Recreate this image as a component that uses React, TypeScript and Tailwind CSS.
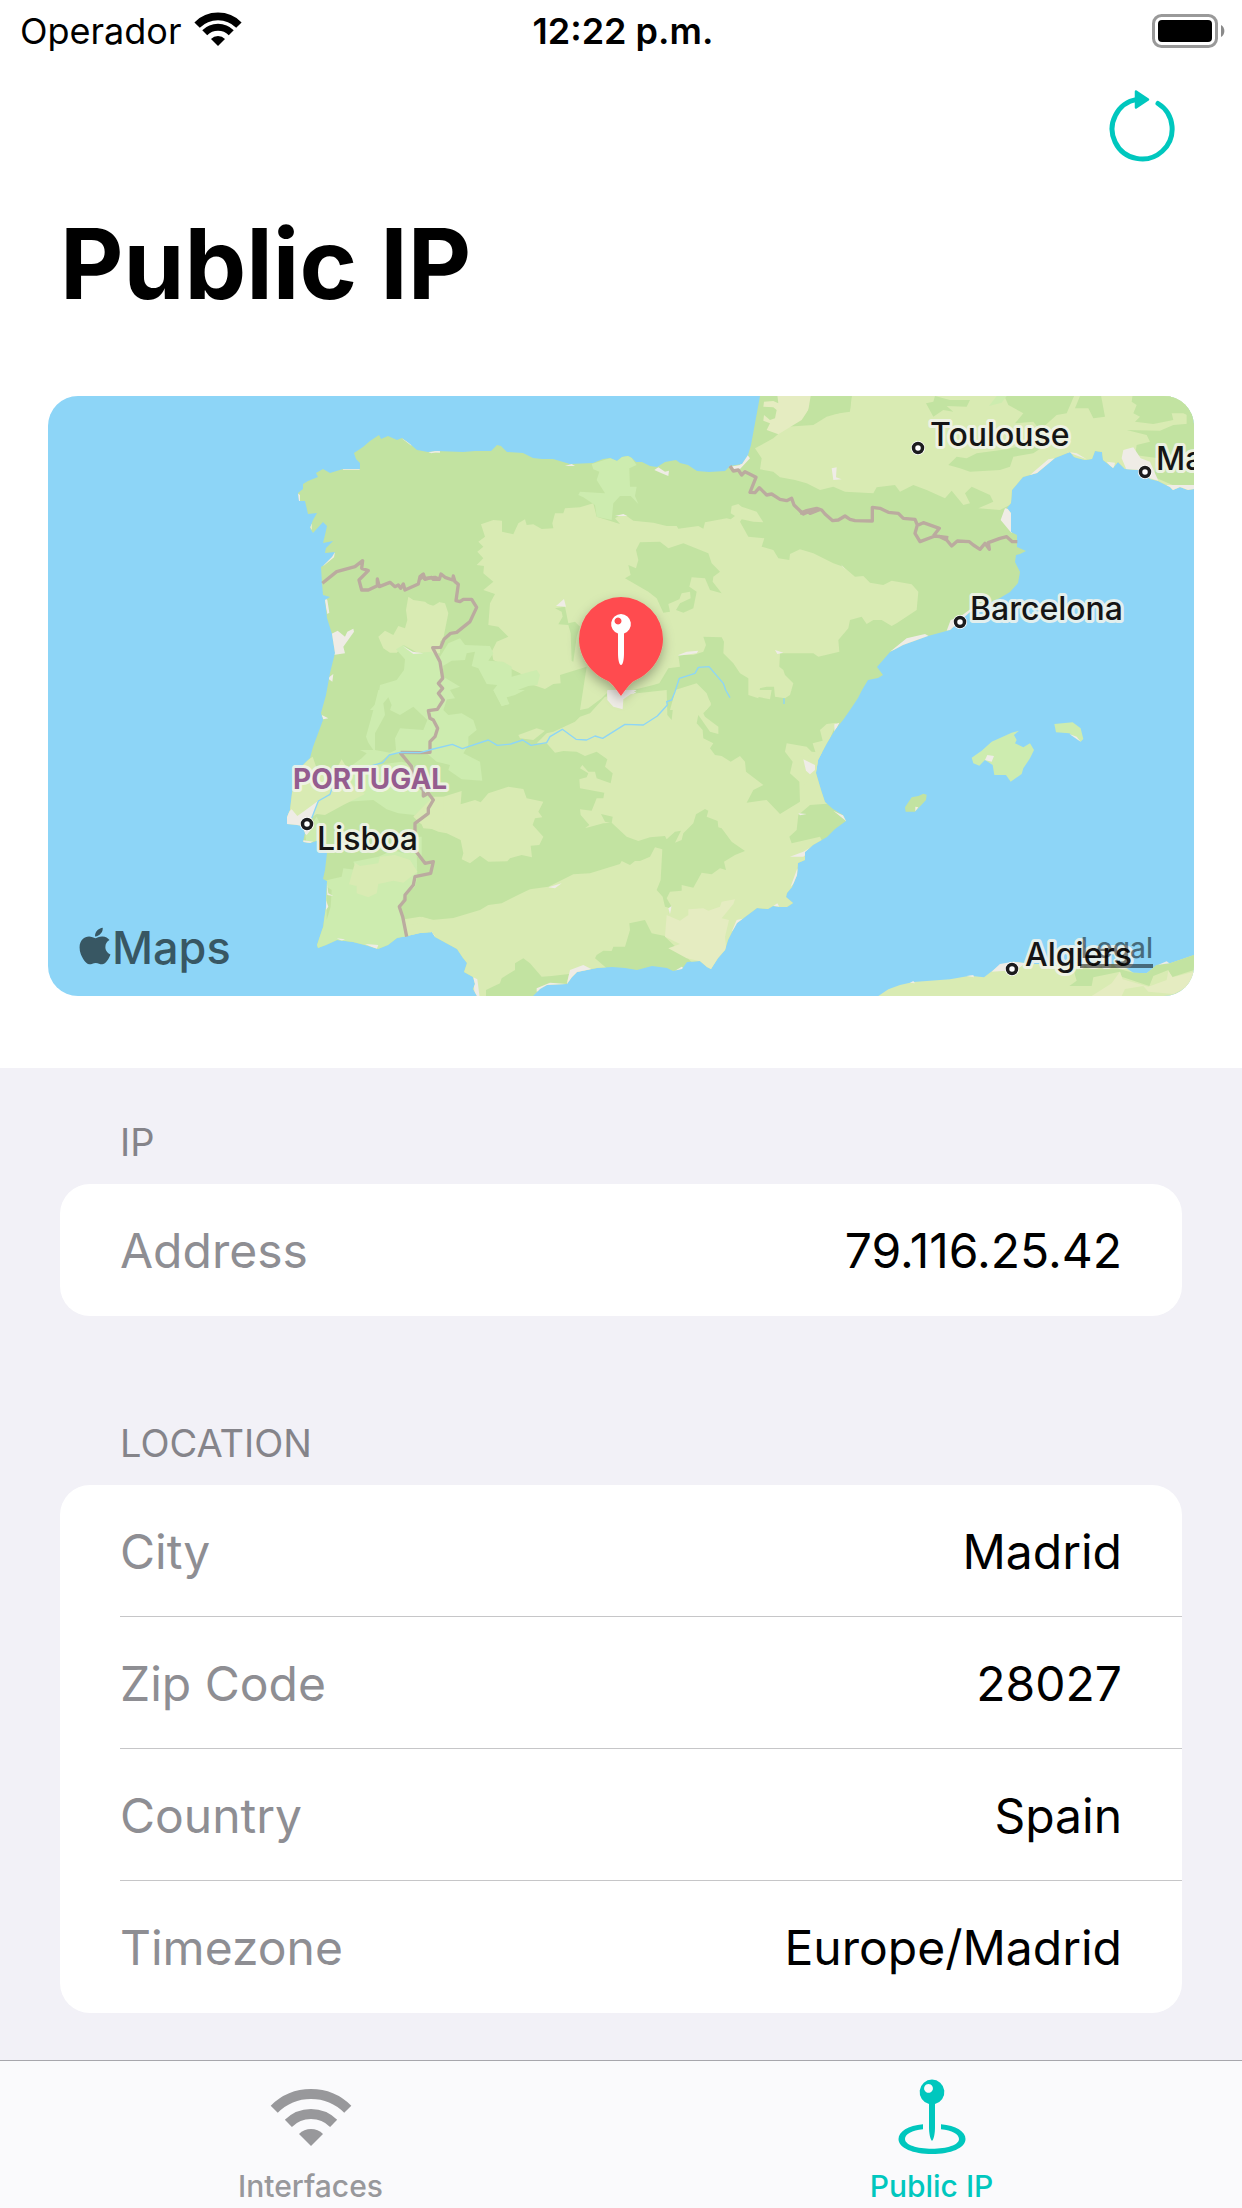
import React from "react";
import { FaApple } from "react-icons/fa";

const SOIL = "#c2e3a1";
const MEADOW = "#d9ebb3";
const LUSH = "#cdecaf";
const ARID = "#e5ecc1";
const URBAN = "#efece6";
const WATER = "#8dd5f7";
const BORDER = "#bbab9f";

const MAINLAND =
  "M760 396 751 445 748 455 742 464 730 466 725 471 709 472 697 471 688 465 680 463 676 460 665 462 657 467 650 466 642 462 636 462 632 458 628 456 622 457 617 461 610 458 603 459 593 463 570 464 553 459 542 459 533 458 523 453 507 452 501 446 497 445 491 451 475 451 463 452 437 451 428 452 417 450 410 444 402 438 397 440 388 436 381 439 379 435 370 441 363 447 354 453 356 459 360 463 360 469 343 469 330 473 323 469 316 473 318 477 308 481 303 484 303 489 298 493 299 501 305 501 308 514 317 513 313 520 310 528 313 533 323 522 327 526 325 535 323 543 333 541 326 548 325 553 335 552 332 557 324 565 321 567 322 583 323 595 330 597 325 600 327 618 332 634 335 653 330 673 326 695 321 713 323 720 313 747 310 758 303 765 295 778 292 793 290 810 287 817 287 824 297 825 302 826 305 833 303 842 310 843 320 840 327 853 325 870 323 879 327 881 326 907 323 927 317 945 318 948 326 945 337 940 353 942 365 945 378 949 388 945 397 938 407 936 420 933 432 932 435 937 457 949 463 958 467 963 464 972 473 977 475 984 473 989 477 996 533 996 540 989 547 985 567 984 572 977 577 972 597 968 612 967 625 968 637 970 652 966 667 968 673 971 682 969 687 962 700 961 707 967 711 969 718 958 725 950 728 940 732 932 737 923 757 908 768 909 773 906 780 907 787 907 793 903 786 897 787 893 792 887 797 875 798 863 805 860 805 852 813 845 827 837 835 829 846 821 843 815 833 809 825 802 821 790 816 773 818 760 827 743 835 730 843 720 850 710 858 698 862 690 868 680 878 678 883 675 877 667 890 652 903 645 928 636 950 630 970 612 1000 598 1010 592 1018 583 1020 572 1015 562 1016 555 1020 554 1026 551 1017 547 1017 535 1011 532 1011 513 1007 508 1011 503 1012 490 1023 477 1037 473 1055 458 1070 452 1074 457 1077 458 1085 460 1092 459 1095 451 1102 452 1103 460 1113 468 1118 462 1125 469 1140 470 1150 479 1158 481 1170 487 1173 490 1180 487 1188 490 1194 489V396Z";

type TileProps = { x: number; y: number; children: React.ReactNode };

/* Terrain is authored on tiles drawn at three times the map scale. */
function Tile({ x, y, children }: TileProps) {
  return <g transform={`translate(${x} ${y}) scale(0.33333)`}>{children}</g>;
}

function Terrain() {
  return (
    <g clipPath="url(#mainland)">
      <Tile x={420} y={390}>
        <path fill={MEADOW} d="M183 403 220 390 246 392 246 425 280 433 295 400 315 388 320 405 340 403 365 417 400 415 397 400 405 370 430 370 435 355 480 352 520 340 530 380 600 402 585 385 600 376 620 378 640 392 700 398 740 408 770 408 775 416 835 408 850 416 855 397 920 385 932 388 945 378 932 370 935 348 955 342 965 350 1010 365 1030 397 1000 395 965 388 960 395 985 440 1033 445 1025 470 1060 480 1075 505 1108 510 1110 492 1140 478 1180 490 1240 520 1270 530 1305 560 1330 558 1350 578 1390 585 1415 572 1475 583 1495 605 1490 660 1430 700 1415 708 1385 690 1360 690 1340 702 1325 680 1290 690 1285 715 1255 750 1258 785 1195 800 1180 790 1080 790 1078 830 1090 840 1095 855 1120 880 1110 915 1095 925 1065 920 1062 890 1040 890 1020 895 1015 925 985 915 985 865 960 850 940 820 910 790 912 755 905 742 850 740 858 765 850 785 820 795 775 795 780 830 745 835 718 880 700 885 640 900 560 910 545 925 505 955 480 960 500 830 420 855 422 880 400 882 375 897 340 885 300 850 220 810 215 785 230 755 265 740 235 710 205 705 210 640 225 612 190 600 220 575 190 550 192 528 170 525 190 505 172 485 190 470 175 455 195 440Z" />
        <path fill={SOIL} d="M660 457 720 455 745 475 790 460 865 490 875 520 900 545 880 560 878 575 905 610 870 600 855 565 815 562 808 590 830 605 820 655 790 668 768 660 780 640 812 625 810 605 785 610 778 628 745 642 750 665 730 668 710 625 685 605 615 565 632 555 625 525 648 535 655 510 648 480ZM405 655 435 650 445 700 465 695 480 710 470 740 460 815 455 813 452 730 445 705 415 703 428 680 425 665Z" />
        <path fill={LUSH} d="M515 222 560 208 625 190 650 225 628 235 630 290 650 290 645 318 655 342 632 318 600 318 580 340 575 390 530 380 525 345 490 322 475 315 480 305 555 310 530 270 538 245 520 238Z" />
        <path fill={MEADOW} d="M0 635 50 650 60 637 75 640 85 670 70 745 40 775 0 790Z" />
        <path fill={LUSH} d="M0 790 50 780 70 830 65 870 70 930 0 960ZM85 760 120 745 135 765 210 768 220 790 205 812 250 815 275 830 275 860 350 840 360 855 352 885 325 888 280 905 255 920 268 942 245 948 220 900 232 885 200 882 175 835 155 828 165 785 140 790 135 810 95 812 65 830 70 860 120 890 90 900 105 925 70 930 60 800Z" />
        <path fill={MEADOW} d="M765 905 815 890 860 918 873 940 860 960 750 960ZM1005 175 1060 145 1100 110 1180 105 1220 80 1290 60 1298 0 2300 0V310H1800L1780 340 1740 360 1675 355 1720 335 1710 315 1655 290 1635 310 1650 340 1630 345 1595 302 1575 325 1520 300 1480 285 1440 305 1425 285 1370 292 1360 310 1275 305 1240 290 1200 300 1160 280 1125 270 1080 262 1060 245 1020 238 1025 205Z" />
        <path fill={ARID} d="M1070 0H1173V40L1165 60 1145 90 1075 133 1040 120 1050 100 1030 92 1032 75 1050 90 1065 85 1070 60 1060 52 1030 50 1032 35 1060 33 1075 40Z" />
        <path fill={URBAN} d="M408 648 432 627 438 650ZM562 903 600 912 650 905 610 935 608 960 580 955 562 935ZM703 240 715 232 735 245 747 242 745 258 725 250ZM930 230 960 225 980 192 990 205 960 237 940 237ZM1065 780 1090 788 1072 792ZM775 795 800 785 835 782 830 790 775 797ZM435 228 455 222 465 228ZM25 186 50 182 55 184 35 190ZM585 378 610 372 622 378Z" />
      </Tile>

      <Tile x={800} y={390}>
        <path fill={SOIL} d="M35 0H155L150 65 80 75 45 100 0 105 25 60ZM445 225 470 200 500 205 530 190 620 178 670 165 740 140 745 160 700 190 640 200 630 230 600 240 510 245 480 235ZM605 0H830L800 70 770 75 720 120 700 95 645 100 670 70 625 45ZM378 40 400 35 405 18 450 30 510 30 500 50 440 48 460 65 430 60 400 80ZM840 18 855 0H900L915 80 880 85 865 55 825 55ZM1000 0H1182V85L1150 70 1115 70 1120 90 1060 102 1005 95 1020 80 1000 70 1010 45 995 35ZM980 120 1080 122 1120 105 1182 100V310L1130 290 1060 260 1075 205 1005 195 1010 165 1050 155 1040 135Z" />
        <path fill={LUSH} d="M567 48 590 18H620L605 38Z" />
        <path fill={URBAN} d="M970 180 1000 172 1022 205 1050 215 1075 272 1040 262 980 240 965 205ZM920 215 945 218 940 240ZM690 255 745 208 765 205 710 260ZM602 390 615 355 640 360 635 430ZM452 690 480 680 515 655 520 675 455 720 440 722ZM270 785 320 745 375 732 390 740 310 770ZM1100 285 1182 285V310H1100ZM100 270 95 235 110 232 108 262 125 268ZM122 522 138 540 128 530ZM800 185 860 208 830 190Z" />
      </Tile>

      <Tile x={420} y={690}>
        <path fill={MEADOW} d="M555 20 510 70 480 80 465 95 400 125 380 130 350 160 380 160 405 188 430 183 470 185 495 198 530 185 562 208 555 230 578 250 572 280 530 265 525 245 505 245 487 225 480 235 505 250 500 262 478 268 480 295 553 308 550 325 530 325 515 362 480 358 482 375 508 405 495 415 550 400 575 398 620 440 655 453 690 442 735 438 740 448 765 425 783 422 765 458 785 450 790 430 820 400 828 373 855 357 865 362 860 380 893 393 895 412 905 415 935 455 975 483 945 495 912 515 918 540 900 535 875 553 845 548 820 593 785 585 785 602 750 605 740 625 755 650 735 690 735 740 850 850 1200 700 1220 480 1200 440 1115 460 1108 440 1130 420 1135 375 1170 345 1240 340 1240 190 1175 185 1160 170 1100 160 1095 185 1118 215 1110 250 1138 275 1140 335 1080 372 1040 330 980 338 1000 300 1030 285 978 245 975 215 960 198 932 215 905 198 885 195 870 175 880 160 850 145 848 120 830 100 835 75 870 125 895 132 895 110 855 80 850 70 873 45 860 10 830 -20 765 0 755 90 742 75 740 0Z" />
        <path fill={SOIL} d="M543 372 578 380 575 400 555 395Z" />
        <path fill={MEADOW} d="M30 320 70 320 125 303 122 343 165 330 182 337 205 310 265 290 310 297 320 325 370 335 355 365 367 382 345 385 338 405 370 440 358 465 332 467 336 502 305 495 270 505 262 514 205 515 180 497 150 520 125 508 130 490 122 450 80 430 55 425 20 410 0 400-20 380ZM1010 0H1055L1050 28 1012 20ZM1075 0H1115L1095 18ZM295 135 350 115 375 122 340 150 300 145Z" />
        <path fill={MEADOW} d="M-60 690 0 680 35 690 100 684 180 660 205 645 245 640 300 612 330 598 385 590 460 553 510 550 600 522 605 513 630 525 645 513 660 513 690 500 705 472 727 478 722 570 710 600 728 620 735 650 750 655 740 690 780 760 735 738 695 730 675 690 628 700 630 720 615 770 580 770 575 783 550 782 530 795 525 805 560 835 520 850 470 850 440 880 447 852 395 858 365 860 330 820 310 805 285 820 285 840 245 865 240 880 198 900 198 930 120 930 120 800 0 740-60 740Z" />
        <path fill={ARID} d="M740 675 780 692 805 675 805 658 850 655 865 662 900 650 905 635 945 628 940 642 905 685 927 690 915 740 920 790 873 850 835 812 800 805 745 775 780 762 735 740Z" />
        <path fill={LUSH} d="M-20 0H90L70 60 85 75 125 70 160 90 170 120 145 140 145 165 130 190 180 215 187 272 125 268 85 240 90 225 50 215 20 190-20 190ZM220 0H315L285 15 260 22 268 42 245 48ZM-10 440H5V500H-10Z" />
        <path fill={URBAN} d="M450 840 490 825 515 838 475 848 455 870 440 885ZM562 0H650L610 28 608 58 580 50 562 30ZM350 895 390 878 440 882 350 905ZM1152 208 1187 225 1185 240 1172 253 1157 242ZM1110 500 1150 485 1200 455 1150 500ZM1112 590 1132 535 1140 560ZM935 725 950 690 975 685 940 720ZM160 862 172 868 180 930H165ZM385 592 425 580 405 595ZM745 655 755 648 750 672ZM765 842 785 830 795 838ZM1135 370 1160 372 1140 376ZM20 732 40 722V740ZM1060 648 1072 640 1078 650Z" />
      </Tile>

      <Tile x={800} y={690}>
        <path fill={MEADOW} d="M60 120 80 102 110 98 50 240 0 300V200L48 192 38 160 68 152Z" />
        <path fill={URBAN} d="M10 208 45 225 45 240 30 253 18 242ZM103 103 118 98 103 128ZM115 370 140 380 138 393 100 362Z" />
      </Tile>

      <Tile x={40} y={390}>
        <path fill={MEADOW} d="M1105 620 1120 630 1155 635 1175 650 1200 635V790H1135L1090 765 1070 788 1050 788 1030 775 1015 740 1035 722 1060 735 1075 708 1095 715 1102 690 1098 660Z" />
        <path fill={LUSH} d="M1068 778 1090 765 1120 790 1175 785 1205 830V960H990L1013 935 1020 885 1070 870 1092 840 1095 808Z" />
        <path fill={SOIL} d="M1030 930 1045 922 1055 945 1025 965ZM1110 955 1155 920 1200 925V965H1110Z" />
        <path fill={URBAN} d="M872 733 893 722 915 740 922 725 940 716 942 725 910 770 915 790 880 795ZM850 528 855 508 885 487 882 502ZM908 239 920 225 930 233 942 220 960 239ZM852 622 862 630 868 668 862 672ZM863 865 880 852 877 875ZM773 310 780 315 780 335H773ZM810 410 815 400 815 420ZM1085 145 1110 158 1115 168ZM1165 187 1200 182V188ZM1088 768 1118 785 1150 790 1120 792Z" />
      </Tile>

      <Tile x={40} y={690}>
        <path fill={LUSH} d="M1015 0H1205V180L1140 188 1048 193 1010 225 920 237 965 205 980 190 960 180 1000 180 985 158 978 140 1000 60ZM870 300 920 237 1085 215 1120 225 1170 330 1125 375 1075 370 1040 358 1000 330 920 335 885 325Z" />
        <path fill={SOIL} d="M1030 40 1045 22 1055 45 1050 60 1080 75 1120 50 1162 90 1150 120 1080 115 1065 145 1068 180 1050 188 1005 180 1005 130 1035 75Z" />
        <path fill={MEADOW} d="M818 200 830 235 870 270 905 208 925 240 920 270 975 312 910 345 855 375 830 372 790 400 730 370 745 250ZM1135 380 1175 330 1210 320V420L1150 415Z" />
        <path fill={LUSH} d="M795 430 830 380 840 400 835 450 800 462ZM850 573 905 560 910 535 950 540 940 515 1015 500 1060 480 1090 490 1130 480 1132 560 1125 590 1090 620 1078 650 1105 740 1000 800 800 790 850 710Z" />
        <path fill={MEADOW} d="M945 518 960 528 1015 520 1020 500 1065 495 1110 510 1132 545 1090 578 1060 572 1015 582 1010 610 985 622 950 610 950 588 927 583ZM1100 705 1140 700 1145 680 1200 695V740H1105Z" />
        <path fill={SOIL} d="M860 590 875 600 872 650 860 690Z" />
        <path fill={URBAN} d="M730 380 755 358 772 378 790 365 835 332 815 385 820 410 800 435 770 410 735 405ZM785 450 820 455 800 465ZM845 75 865 85 850 88ZM860 575 865 610 880 618 862 615ZM858 630 865 650 858 660ZM975 762 1015 765 1010 778ZM890 745 915 748 905 752ZM1172 725 1185 738H1170Z" />
      </Tile>
    </g>
  );
}

function Islands() {
  return (
    <Tile x={800} y={690}>
      <path fill={LUSH} d="M515 203 545 182 575 155 635 128 657 122 642 135 650 150 645 160 670 172 690 160 702 180 690 205 670 235 665 252 632 275 618 255 583 255 578 225 555 210 538 227 520 220ZM763 102 818 97 842 115 850 147 842 155 808 130 768 127Z" />
      <path fill={SOIL} d="M315 352 335 322 355 318 370 311 380 314 378 330 345 365 317 365Z" />
      <path fill={URBAN} d="M555 210 562 195 582 198 575 215ZM808 132 830 140 842 155ZM346 350 355 352 346 364Z" />
      <path fill={MEADOW} d="M235 918 265 898 300 885 340 876 450 868 510 857 552 862 600 825 640 815 700 822 960 822 1000 848 1040 850 1070 825 1110 820 1182 795V918Z" />
      <path fill={SOIL} d="M820 838H960L1000 848 1040 850 1070 825 1110 820 1182 795V840L1115 862 1105 840 1060 858 1048 888 965 860 960 845 880 862 875 888 808 888 830 872Z" />
      <path fill={ARID} d="M960 845 968 868 1045 890 1100 870 1105 842 1118 862 1182 845V880L1120 912 1045 905 1030 888 975 897 965 918H875L935 880Z" />
      <path fill={URBAN} d="M575 845 600 822 640 815 675 820 650 840ZM500 858 520 855 522 862ZM330 878 340 873 345 880ZM1075 824 1100 814 1108 820Z" />
    </Tile>
  );
}

function Lines() {
  return (
    <g fill="none" strokeLinejoin="round">
      <g stroke={BORDER} strokeWidth="10">
        <Tile x={40} y={390}>
          <path d="M847 580 890 545 945 530 968 512 965 535 985 542 957 570 965 600 985 600 1012 587 1012 567 1018 590 1050 577 1065 590 1075 585 1082 595 1090 582 1095 600 1135 582 1140 560 1150 552 1155 568 1175 562 1180 568 1200 568" />
        </Tile>
        <Tile x={420} y={390}>
          <path d="M0 568 8 555 12 565 45 562 58 568 63 552 75 562 98 570 100 558 105 575 115 583 108 632 120 635 130 628 155 628 170 652 150 695 110 727 92 730 72 748 62 772 38 773 60 815 68 865 55 880 68 895 55 910 70 930 52 958 25 962 30 985 40 990 53 1015 45 1040 30 1055 30 1087 0 1088-58 1087" />
          <path d="M930 228 940 243 955 240 965 255 975 245 1008 262 990 307 1005 308 1018 293 1030 305 1040 315 1055 312 1080 328 1100 332 1115 325 1122 345 1150 372 1165 365 1170 370 1200 358" />
        </Tile>
        <Tile x={40} y={690}>
          <path d="M1080 187 1115 230 1120 270 1150 300 1150 318 1165 310 1180 330 1165 355 1165 370 1125 400 1125 480 1155 520 1180 515 1172 550 1125 560 1120 585 1095 615 1095 630 1078 650 1088 680 1100 740" />
        </Tile>
        <Tile x={800} y={390}>
          <path d="M0 370 20 362 50 355 65 360 75 372 98 392 115 390 135 378 150 388 165 392 217 393 217 352 240 355 265 367 295 370 310 385 345 388 352 405 345 430 360 455 405 438 445 443 M355 405 370 398 418 415 400 438M415 438 440 450 455 468 472 453 508 455 520 465 540 478 555 460 568 478 565 458 600 445 620 440 637 455 652 455" />
        </Tile>
      </g>
      <g stroke={WATER} strokeWidth="4">
        <Tile x={420} y={390}>
          <path d="M930 923 917 900 910 880 867 830 835 832 825 850 778 865 765 905 755 930 740 935 742 945 712 978 670 1005 615 1003 548 1045 525 1038 500 1050 468 1048 427 1018 390 1040 380 1058 333 1066 308 1050 272 1062 232 1066 205 1050 127 1076 97 1063 40 1077 0 1088-60 1087-92 1095-112 1118-175 1135-220 1137-260 1185-270 1213-305 1233-325 1285M1092 925V942" />
        </Tile>
      </g>
    </g>
  );
}

const cities = [
  { name: "Toulouse", dot: [918, 448], label: [930, 446] },
  { name: "Barcelona", dot: [960, 622], label: [970, 620] },
  { name: "Ma", dot: [1145, 472], label: [1156, 470] },
  { name: "Lisboa", dot: [307, 824], label: [317, 850] },
  { name: "Algiers", dot: [1012, 969], label: [1025, 966] },
];

function MapView() {
  return (
    <div className="relative mx-12 mt-[72px] overflow-hidden rounded-[30px]">
      <svg viewBox="48 396 1146 600" className="block w-full" role="img" aria-label="Map of the Iberian Peninsula">
        <defs>
          <clipPath id="mainland">
            <path d={MAINLAND} />
          </clipPath>
          <filter id="pinShadow" x="-30%" y="-30%" width="160%" height="160%">
            <feDropShadow dx="0" dy="5" stdDeviation="6" floodColor="#000" floodOpacity="0.3" />
          </filter>
        </defs>
        <rect x="48" y="396" width="1146" height="600" fill={WATER} />
        <path d={MAINLAND} fill={SOIL} />
        <Terrain />
        <Islands />
        <Lines />
        <g fontFamily="Inter, sans-serif" strokeLinejoin="round" stroke="#f3f4ec" strokeOpacity="0.85">
          <text x="293" y="789" fontSize="28" fontWeight="700" fill="#955c8f" strokeWidth="6" paintOrder="stroke">PORTUGAL</text>
          {cities.map((c) => (
            <g key={c.name}>
              <circle cx={c.dot[0]} cy={c.dot[1]} r="7" fill="#fff" stroke="none" />
              <circle cx={c.dot[0]} cy={c.dot[1]} r="4.5" fill="#fff" stroke="#1c1c1e" strokeOpacity="1" strokeWidth="3.5" />
              <text x={c.label[0]} y={c.label[1]} fontSize="32" fontWeight="500" fill="#151515" strokeWidth="6" paintOrder="stroke">{c.name}</text>
            </g>
          ))}
        </g>
        <path
          filter="url(#pinShadow)"
          fill="#ff4b50"
          d="M621 696C618 692 612 683 608 681 592 674 579 658 579 639A42 42 0 0 1 663 639C663 658 650 674 634 681 630 683 624 692 621 696Z"
        />
        <path fill="#fff" fillRule="evenodd" d="M621 614a10 10 0 0 1 3 19.500V653C624 659 623 665 621 665S618 659 618 653V633.500A10 10 0 0 1 621 614ZM618 617.500a3.500 3.500 0 1 0 .01 0Z" />
      </svg>
      <div className="absolute bottom-4 left-[30px] flex items-center text-[#385763]">
        <FaApple className="mb-1 h-[42px] w-[34px]" aria-hidden="true" />
        <span className="text-[45px] leading-[64px] font-medium">Maps</span>
      </div>
      <a
        href="#legal"
        className="absolute right-[41px] bottom-[28px] border-b-4 border-black/50 text-[28px] leading-[32px] font-medium text-black/50"
      >
        Legal
      </a>
    </div>
  );
}

type WifiProps = { className: string; outer: [number, number]; middle: [number, number] };

function wedge(r: number) {
  const d = r * Math.SQRT1_2;
  return `M${41 - d} ${58 - d}A${r} ${r} 0 0 1 ${41 + d} ${58 - d}`;
}

function WifiIcon({ className, outer, middle }: WifiProps) {
  return (
    <svg viewBox="0 0 82 58" className={className} aria-hidden="true">
      <g fill="none" stroke="currentColor">
        <path d={wedge(outer[0])} strokeWidth={outer[1]} />
        <path d={wedge(middle[0])} strokeWidth={middle[1]} />
      </g>
      <path d="M41 58 29 46A17 17 0 0 1 53 46Z" fill="currentColor" />
    </svg>
  );
}

function StatusBar() {
  return (
    <header className="grid h-[62px] grid-cols-3 items-center px-4 pl-5 text-[36px] leading-[42px]">
      <div className="flex items-center gap-3">
        <span>Operador</span>
        <WifiIcon className="mb-1 h-[34px] w-[48px]" outer={[50.5, 13]} middle={[32, 12]} />
      </div>
      <time className="text-center font-semibold whitespace-nowrap">12:22 p.m.</time>
      <svg viewBox="0 0 74 34" className="h-[34px] w-[74px] justify-self-end" role="img" aria-label="Battery full">
        <rect x="1.500" y="1.500" width="63" height="31" rx="8" fill="none" stroke="#999" strokeWidth="3" />
        <rect x="6" y="6" width="54" height="22" rx="4" />
        <path d="M69 11a7 7 0 0 1 0 12Z" fill="#8a8a8a" />
      </svg>
    </header>
  );
}

function RefreshIcon() {
  return (
    <svg viewBox="0 0 66 72" className="h-[72px] w-[66px]" aria-hidden="true">
      <path d="M28 9.400A30 30 0 1 0 49 13.500" fill="none" stroke="#00c7be" strokeWidth="5" strokeLinecap="round" />
      <path d="M27 1.500 39 9.500 27 17.500Z" fill="#00c7be" stroke="#00c7be" strokeWidth="2.500" strokeLinejoin="round" />
    </svg>
  );
}

function PinIcon() {
  return (
    <svg viewBox="0 0 68 76" className="h-[76px] w-[68px]" aria-hidden="true" fill="currentColor">
      <path
        fillRule="evenodd"
        d="M34 0.500a12.500 12.500 0 0 1 3 24.600V48C37 54 36 60 34 62 32 60 31 54 31 48V25.100A12.500 12.500 0 0 1 34 0.500ZM30.500 5a4.400 4.400 0 1 0 .01 0Z"
      />
      <path
        fillRule="evenodd"
        d="M25 45.200C10 46.500 0.500 52.500 0.500 60 0.500 69 15 75 34 75S67.500 69 67.500 60C67.500 52.500 58 46.500 43 45.200V50.200C54 51.200 61 55 61 60 61 66 49 69.700 34 69.700S7 66 7 60C7 55 14 51.200 25 50.200Z"
      />
    </svg>
  );
}

type Row = { label: string; value: string };

function Section({ title, rows }: { title: string; rows: Row[] }) {
  return (
    <section>
      <h2 className="px-15 text-[38px] leading-[48px] text-[#85848a]">{title}</h2>
      <dl className="mt-[18px] overflow-hidden rounded-[30px] bg-white pl-15">
        {rows.map((row) => (
          <div
            key={row.label}
            className="flex h-[132px] items-center justify-between border-[#c6c6c8] pt-0.5 pr-15 text-[48px] leading-[60px] not-last:border-b"
          >
            <dt className="text-[#8e8e93]">{row.label}</dt>
            <dd>{row.value}</dd>
          </div>
        ))}
      </dl>
    </section>
  );
}

export default function App() {
  return (
    <div className="flex min-h-screen flex-col bg-[#f2f1f7] font-['Inter',sans-serif] text-black">
      <div className="bg-white pb-[72px]">
        <StatusBar />
        <div className="flex justify-end pt-7 pr-[67px]">
          <button type="button" aria-label="Refresh">
            <RefreshIcon />
          </button>
        </div>
        <h1 className="mt-[42px] px-15 text-[98px] leading-[120px] font-bold">Public IP</h1>
        <MapView />
      </div>

      <main className="flex grow flex-col gap-[103px] px-15 pt-[50px] pb-[47px]">
        <Section title="IP" rows={[{ label: "Address", value: "79.116.25.42" }]} />
        <Section
          title="LOCATION"
          rows={[
            { label: "City", value: "Madrid" },
            { label: "Zip Code", value: "28027" },
            { label: "Country", value: "Spain" },
            { label: "Timezone", value: "Europe/Madrid" },
          ]}
        />
      </main>

      <nav className="grid h-[148px] grid-cols-2 border-t border-[#a7a6ac] bg-[#fafafc] text-[30px] leading-[36px] font-medium">
        <button type="button" className="flex flex-col items-center justify-end gap-[22px] pb-1 text-[#98989b]">
          <WifiIcon className="h-[58px] w-[82px]" outer={[52, 10]} middle={[32, 10]} />
          Interfaces
        </button>
        <button type="button" aria-current="page" className="flex flex-col items-center justify-end gap-[13px] pb-1 text-[#00c7be]">
          <PinIcon />
          Public IP
        </button>
      </nav>
    </div>
  );
}
